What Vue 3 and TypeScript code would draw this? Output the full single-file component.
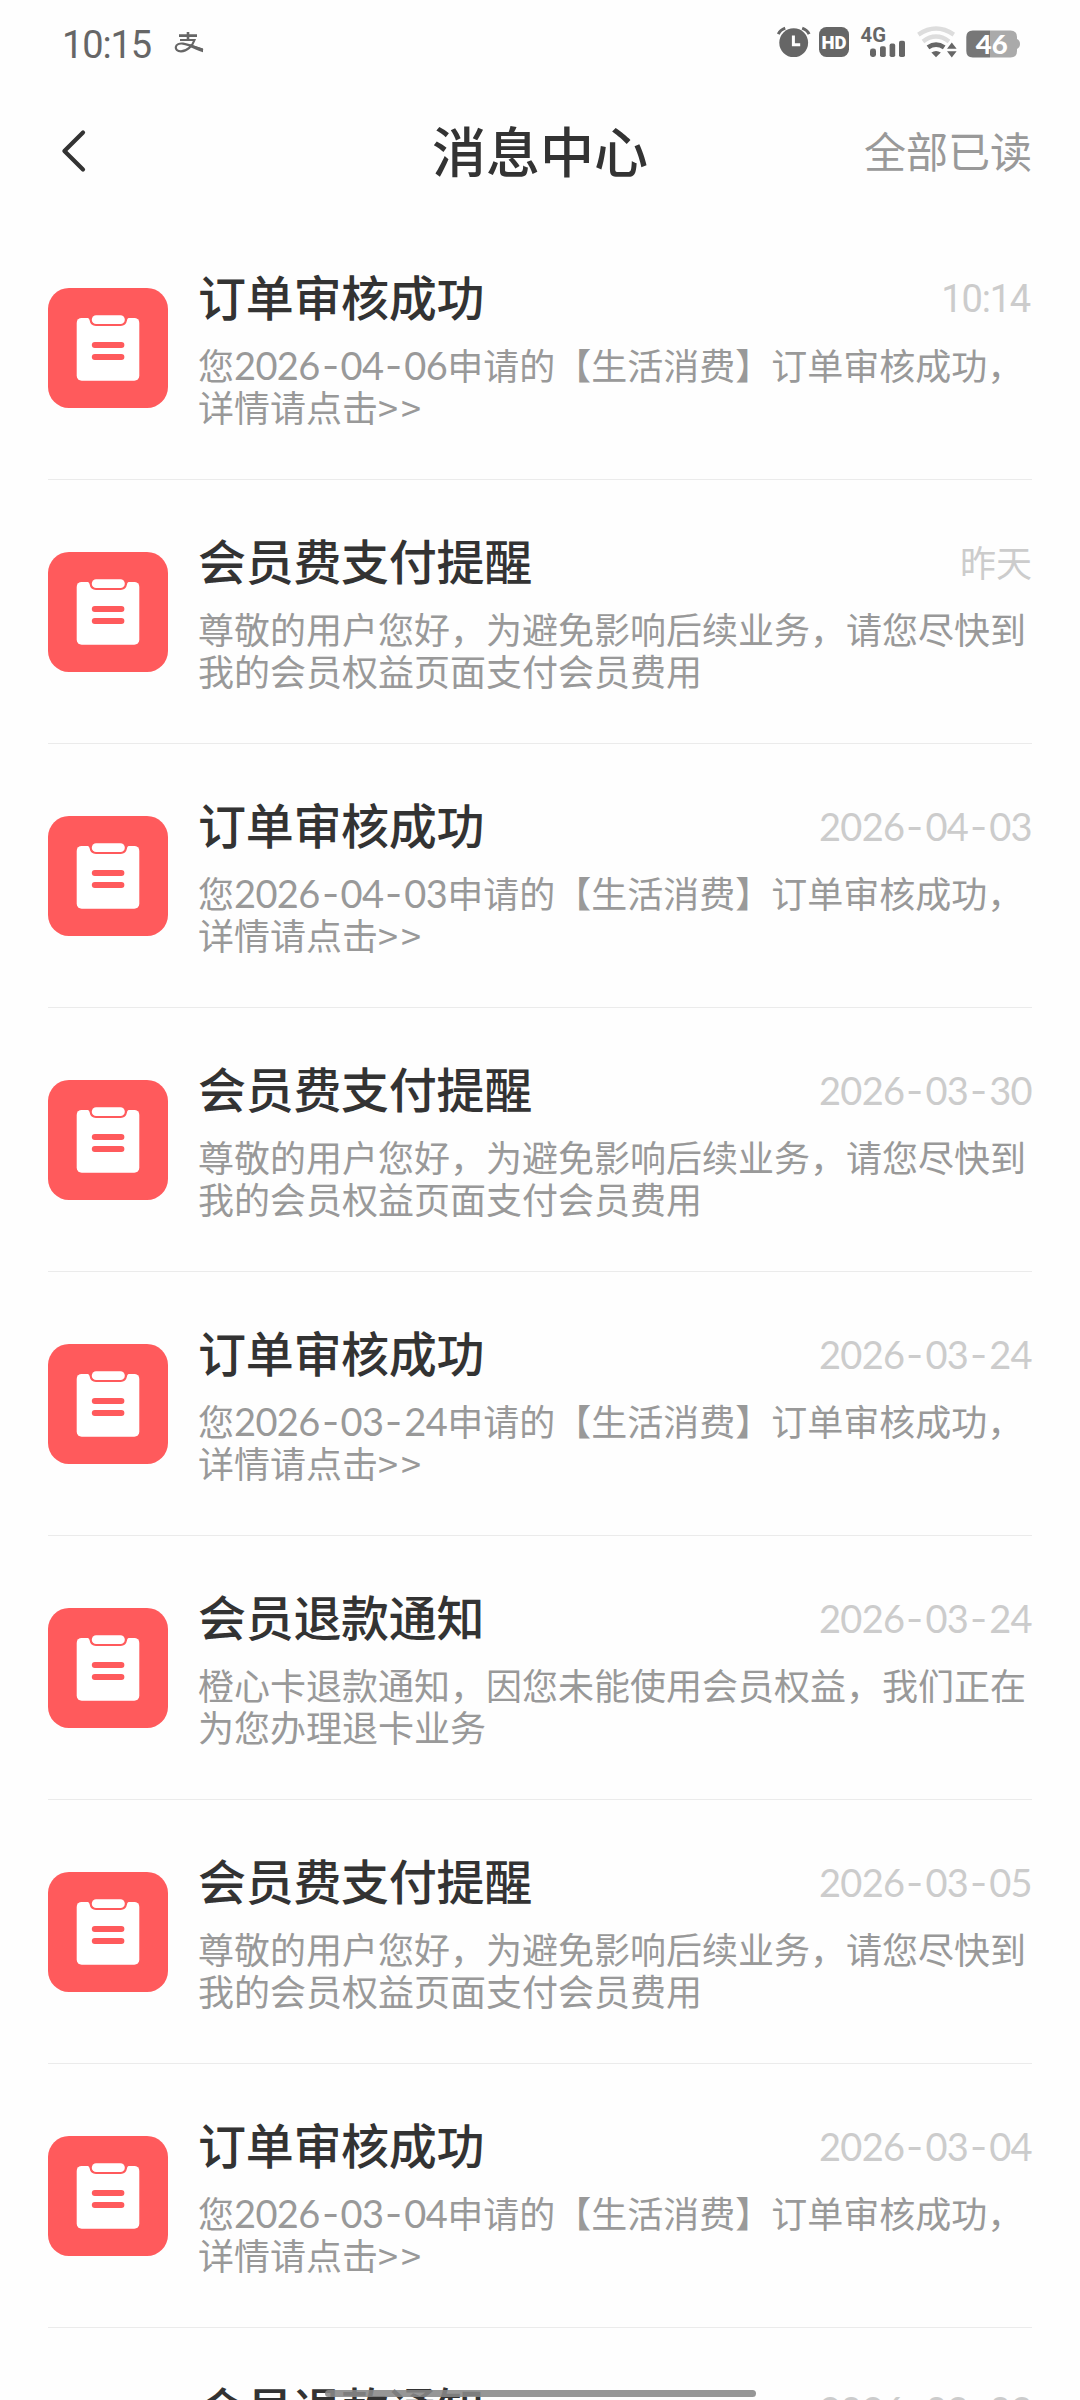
<script setup lang="ts">
interface Message {
  title: string
  time: string
  body: string
}

const fee = '尊敬的用户您好，为避免影响后续业务，请您尽快到我的会员权益页面支付会员费用'
const refund = '橙心卡退款通知，因您未能使用会员权益，我们正在为您办理退卡业务'
const order = (date: string) => `您${date}申请的【生活消费】订单审核成功，详情请点击>>`

const messages: Message[] = [
  { title: '订单审核成功', time: '10:14', body: order('2026-04-06') },
  { title: '会员费支付提醒', time: '昨天', body: fee },
  { title: '订单审核成功', time: '2026-04-03', body: order('2026-04-03') },
  { title: '会员费支付提醒', time: '2026-03-30', body: fee },
  { title: '订单审核成功', time: '2026-03-24', body: order('2026-03-24') },
  { title: '会员退款通知', time: '2026-03-24', body: refund },
  { title: '会员费支付提醒', time: '2026-03-05', body: fee },
  { title: '订单审核成功', time: '2026-03-04', body: order('2026-03-04') },
  { title: '会员退款通知', time: '2026-03-03', body: refund },
]

// Splits text so that dates, clock times and arrows get their own lettering.
const split = (text: string) => text.split(/(\d{4}-\d\d-\d\d|\d\d:\d\d|>>)/).filter(Boolean)
const dateParts = (text: string) => text.split(/(-)/)
const kind = (part: string) =>
  /^\d{4}-/.test(part) ? 'date' : /^\d\d:/.test(part) ? 'clock' : part === '>>' ? 'arrows' : 'plain'
</script>

<template>
  <div class="screen">
    <header class="status">
      <span class="status-time">10:15</span>
      <svg class="pay" width="30" height="24" viewBox="174 30 30 24" fill="none" stroke="#666">
        <path d="M179 35.6H197M188 32V40" stroke-width="2.6" />
        <path d="M180 40H194.5C192.5 46 187 51.3 181 51.3C177 51.3 175.6 49.3 175.8 47.2C176.2 44.4 179.5 43.2 183 43.6C189 44.4 195 47.4 203 50" stroke-width="2.2" />
        <path d="M190 44.2L203 48.4V52.2C198 50.8 193 48.4 189 46.4Z" fill="#666" stroke="none" />
      </svg>
      <div class="status-icons">
        <svg width="34" height="32" viewBox="777 26 34 32">
          <circle cx="793.7" cy="42.7" r="14.4" fill="#666" />
          <path d="M778.3 34.2Q780.2 30 785.2 28.2M809.1 34.2Q807.2 30 802.2 28.2" fill="none" stroke="#666" stroke-width="3" />
          <path d="M793.4 35.6V44.8H800.2" fill="none" stroke="#fff" stroke-width="3" />
        </svg>
        <svg class="hd" width="30" height="30" viewBox="0 0 30 30">
          <rect width="30" height="30" rx="7.5" fill="#666" />
          <text x="15" y="21.8" text-anchor="middle" textLength="25" lengthAdjust="spacingAndGlyphs" fill="#fff">HD</text>
        </svg>
        <svg class="cell" width="46" height="32" viewBox="860 26 46 32" fill="#666">
          <text x="860.6" y="41.6" textLength="25.4" lengthAdjust="spacingAndGlyphs">4G</text>
          <rect x="870" y="48.6" width="6" height="8.4" rx="2.4" />
          <rect x="880" y="46.3" width="5.8" height="10.7" rx="1.8" />
          <rect x="889.6" y="43.6" width="5.6" height="13.4" rx="1.8" />
          <rect x="899" y="40.8" width="6" height="16.2" rx="1.8" />
        </svg>
        <svg class="wifi" width="41" height="32" viewBox="917 26 41 32">
          <g fill="none" stroke="#ddd" stroke-width="4.4">
            <path d="M918.4 34.6Q936 22.6 953.8 34.6" />
            <path d="M923 41.4Q936 31.8 949 41.4" />
          </g>
          <path d="M928 47.4Q936 41.8 944.2 47.4" fill="none" stroke="#666" stroke-width="4.6" />
          <path d="M931.4 52.6Q936 49.4 940.8 52.6L936 57.2Z" fill="#666" />
          <path d="M951.8 42.6L956.6 48.8H947ZM947 51.2H956.6L951.8 57.4Z" fill="#666" />
        </svg>
        <svg class="battery" width="54" height="28" viewBox="966 29.5 54 28">
          <path d="M972.8 30H990V57H972.8Q966.3 57 966.3 50.5V36.5Q966.3 30 972.8 30Z" fill="#777" />
          <path d="M990 30H1010.5Q1017 30 1017 36.5V38.6Q1020 40 1020 43.5T1017 48.4V50.5Q1017 57 1010.5 57H990Z" fill="#aaa" />
          <text x="991.7" y="53" text-anchor="middle" textLength="32" lengthAdjust="spacingAndGlyphs" fill="#fff">46</text>
        </svg>
      </div>
    </header>

    <nav class="bar">
      <svg class="back" width="24" height="42" viewBox="0 0 24 42" fill="none" stroke="#333" stroke-width="4.2" stroke-linecap="round" stroke-linejoin="round">
        <path d="M21 2.6L2.4 21L21 39.4" />
      </svg>
      <h1>消息中心</h1>
      <button type="button">全部已读</button>
    </nav>

    <ul class="list">
      <li v-for="(m, i) in messages" :key="i" class="row">
        <svg class="badge" width="120" height="120" viewBox="0 0 120 120">
          <rect width="120" height="120" rx="21" fill="#ff5a5c" />
          <rect x="28.7" y="29.9" width="62.6" height="62.8" rx="5" fill="#fff" />
          <path d="M40 29.4Q42 30 42.2 32.2Q43 37.3 48 37.3H72.6Q77.6 37.3 78.4 32.2Q78.6 30 80.4 29.4Z" fill="#ff5a5c" stroke="#ff5a5c" stroke-width="1.2" />
          <rect x="43.8" y="27.3" width="33" height="8.7" rx="4.35" fill="#fff" />
          <rect x="43.8" y="54" width="32.6" height="6" rx="3" fill="#ff5a5c" />
          <rect x="43.8" y="66" width="32.6" height="6" rx="3" fill="#ff5a5c" />
        </svg>
        <div class="content">
          <div class="head">
            <h2>{{ m.title }}</h2>
            <div class="time" :class="kind(m.time)">
              <template v-if="kind(m.time) === 'date'"><span v-for="(c, n) in dateParts(m.time)" :key="n" :class="{ dash: c === '-' }">{{ c }}</span></template>
              <template v-else>{{ m.time }}</template>
            </div>
          </div>
          <p><template v-for="(p, k) in split(m.body)" :key="k"><span v-if="kind(p) === 'date'" class="date"><span v-for="(c, n) in dateParts(p)" :key="n" :class="{ dash: c === '-' }">{{ c }}</span></span><span v-else-if="kind(p) === 'arrows'" class="arrows">{{ p }}</span><template v-else>{{ p }}</template></template></p>
        </div>
      </li>
    </ul>
    <div class="home-indicator"></div>
  </div>
</template>

<style>
body {
  margin: 0;
  background: #fefefe;
}
</style>

<style scoped>
.screen {
  position: relative;
  width: 1080px;
  height: 2400px;
  overflow: hidden;
  background: #fefefe;
  font-family: "Noto Sans CJK SC", sans-serif;
  text-spacing-trim: space-all;
  color: #333;
}
svg {
  display: block;
  overflow: visible;
}
.status {
  display: flex;
  align-items: center;
  height: 84px;
  box-sizing: border-box;
  padding: 0 60px 0 62px;
}
.status-time {
  width: 92px;
  margin-top: 5px;
  font: 400 38px/44px Roboto, sans-serif;
  letter-spacing: -1.1px;
  color: #666;
}
.pay {
  margin-left: 20px;
}
.status-icons {
  display: flex;
  align-items: center;
  margin-left: auto;
}
.hd { margin-left: 8px; }
.hd text { font: 900 19px Roboto, sans-serif; }
.cell { margin-left: 11px; }
.cell text { font: 700 20.5px Roboto, sans-serif; }
.wifi { margin-left: 11px; }
.battery { margin-left: 8px; margin-top: 3px; }
.battery text { font: 900 26px Lato, sans-serif; }

.bar {
  display: grid;
  grid-template-columns: 1fr auto 1fr;
  align-items: center;
  height: 132px;
  padding: 0 48px 0 62px;
}
.bar h1 {
  margin: 0 0 0 -14px;
  font-size: 54px;
  line-height: 80px;
  font-weight: 500;
}
.back {
  margin-top: 2px;
}
.bar button {
  justify-self: end;
  border: 0;
  padding: 0;
  background: none;
  font: 400 42px/60px "Noto Sans CJK SC", sans-serif;
  color: #999;
}
.list {
  list-style: none;
  margin: 0;
  padding: 0 48px;
}
.row {
  display: flex;
  align-items: center;
  gap: 30px;
  height: 264px;
  box-sizing: border-box;
  border-bottom: 1px solid #ebebeb;
}
.badge {
  flex: none;
}
.content {
  flex: 1;
}
.head {
  display: flex;
  align-items: center;
  justify-content: space-between;
  height: 70px;
  margin-top: -7px;
}
.head h2 {
  margin: -2px 0 0;
  font-size: 48px;
  line-height: 70px;
  font-weight: 500;
  letter-spacing: -0.3px;
}
.content p {
  margin: 12px 0 0;
  font-size: 36px;
  line-height: 42px;
  color: #999;
}
.date {
  white-space: nowrap;
  font-family: Lato, sans-serif;
  font-size: 38px;
  line-height: 42px;
  letter-spacing: -0.65px;
}
p .date {
  line-height: 1px;
}
.dash {
  display: inline-block;
  width: 21px;
  line-height: 1;
  letter-spacing: 0;
  text-align: center;
  transform: translateY(-1px) scaleX(1.25);
}
p .dash {
  line-height: 1px;
}
.time {
  color: #ccc;
  font-size: 36px;
  line-height: 52px;
  margin-top: 1px;
}
.time.date {
  margin-top: 4px;
  font-size: 38px;
  line-height: 52px;
}
.time.clock {
  margin: 6px 2px 0 0;
  font-family: Roboto, sans-serif;
  font-weight: 400;
  font-size: 38px;
  letter-spacing: -1.2px;
}
.arrows {
  letter-spacing: 3px;
}
.home-indicator {
  position: absolute;
  left: 325px;
  top: 2390px;
  width: 431px;
  height: 7px;
  border-radius: 4px;
  background: rgba(136, 136, 136, 0.88);
}
</style>
